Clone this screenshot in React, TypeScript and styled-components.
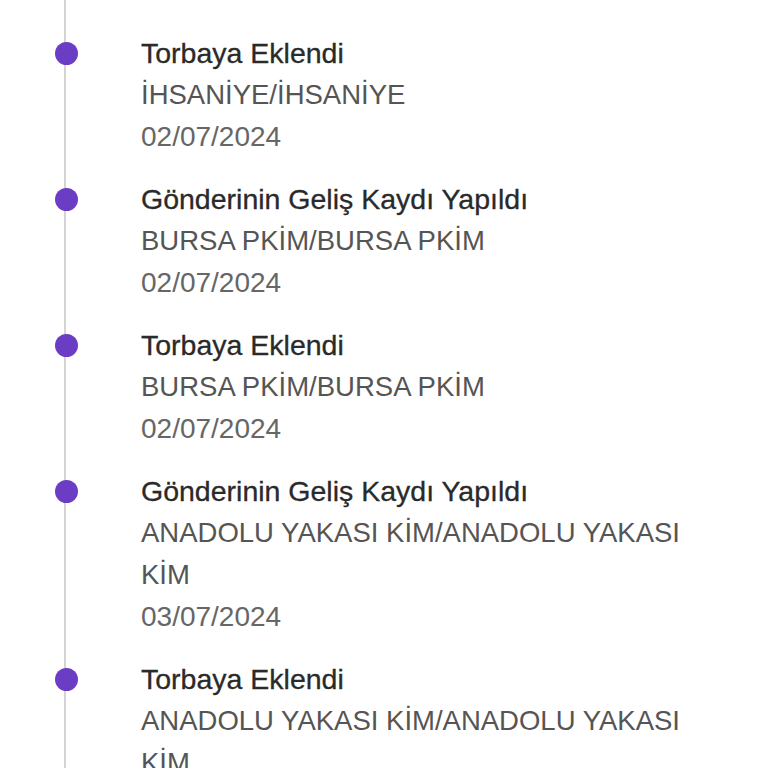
import React, { ReactElement } from 'react';
import styled, { createGlobalStyle } from 'styled-components';

interface TrackingEvent {
  status: string;
  location: string;
  date: string;
}

const events: TrackingEvent[] = [
  {
    status: 'Gönderinin Geliş Kaydı Yapıldı',
    location: 'İHSANİYE/İHSANİYE',
    date: '02/07/2024',
  },
  {
    status: 'Torbaya Eklendi',
    location: 'İHSANİYE/İHSANİYE',
    date: '02/07/2024',
  },
  {
    status: 'Gönderinin Geliş Kaydı Yapıldı',
    location: 'BURSA PKİM/BURSA PKİM',
    date: '02/07/2024',
  },
  {
    status: 'Torbaya Eklendi',
    location: 'BURSA PKİM/BURSA PKİM',
    date: '02/07/2024',
  },
  {
    status: 'Gönderinin Geliş Kaydı Yapıldı',
    location: 'ANADOLU YAKASI KİM/ANADOLU YAKASI KİM',
    date: '03/07/2024',
  },
  {
    status: 'Torbaya Eklendi',
    location: 'ANADOLU YAKASI KİM/ANADOLU YAKASI KİM',
    date: '03/07/2024',
  },
];

const App = (): ReactElement => {
  return (
    <>
      <GlobalStyle />
      <Page>
        <Timeline>
          {events.map((event, i) => (
            <Entry key={i}>
              <Marker>
                <Dot />
              </Marker>
              <Details>
                <Status>{event.status}</Status>
                <Location>{event.location}</Location>
                <EventDate>{event.date}</EventDate>
              </Details>
            </Entry>
          ))}
        </Timeline>
      </Page>
    </>
  );
};

export default App;

const GlobalStyle = createGlobalStyle`
  html, body {
    margin: 0;
    padding: 0;
    background: #ffffff;
    overflow: hidden;
  }

  body {
    font-family: 'Liberation Sans', Arial, sans-serif;
  }
`;

const Page = styled.div`
  width: 768px;
  height: 768px;
  overflow: hidden;
`;

const Timeline = styled.div`
  position: relative;
  display: flex;
  flex-direction: column;
  gap: 20px;
  margin-top: -114px;
  padding-right: 40px;

  &::before {
    content: '';
    position: absolute;
    left: 64px;
    top: 0;
    bottom: 0;
    width: 2px;
    background: #d4d4d4;
  }
`;

const Entry = styled.div`
  display: flex;
  flex-direction: row;
`;

const Marker = styled.div`
  flex: 0 0 141px;
  display: flex;
  justify-content: flex-start;
  padding-left: 55px;
  box-sizing: border-box;
`;

const Dot = styled.span`
  position: relative;
  width: 23px;
  height: 23px;
  margin-top: 10px;
  border-radius: 50%;
  background: #6a3dc4;
`;

const Details = styled.div`
  display: flex;
  flex-direction: column;
  font-size: 28px;
  line-height: 42px;
`;

const Status = styled.span`
  font-size: 28.5px;
  color: #2a2a2a;
  -webkit-text-stroke: 0.3px #2a2a2a;
`;

const Location = styled.span`
  font-size: 27.5px;
  color: #555555;
`;

const EventDate = styled.span`
  color: #666666;
`;
